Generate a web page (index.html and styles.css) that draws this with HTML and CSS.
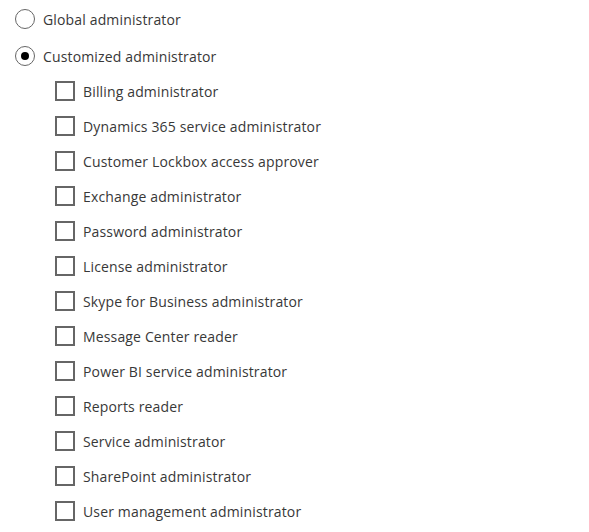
FILE: index.html
```html
<!DOCTYPE html>
<html>
<head>
<meta charset="utf-8">
<link rel="stylesheet" href="styles.css">
</head>
<body>
<div class="form">
  <div class="radios">
    <label class="row"><span class="radio"></span><span class="label">Global administrator</span></label>
    <label class="row"><span class="radio checked"></span><span class="label">Customized administrator</span></label>
  </div>
  <div class="checks">
    <label class="row"><span class="box"></span><span class="label">Billing administrator</span></label>
    <label class="row"><span class="box"></span><span class="label">Dynamics 365 service administrator</span></label>
    <label class="row"><span class="box"></span><span class="label">Customer Lockbox access approver</span></label>
    <label class="row"><span class="box"></span><span class="label">Exchange administrator</span></label>
    <label class="row"><span class="box"></span><span class="label">Password administrator</span></label>
    <label class="row"><span class="box"></span><span class="label">License administrator</span></label>
    <label class="row"><span class="box"></span><span class="label">Skype for Business administrator</span></label>
    <label class="row"><span class="box"></span><span class="label">Message Center reader</span></label>
    <label class="row"><span class="box"></span><span class="label">Power BI service administrator</span></label>
    <label class="row"><span class="box"></span><span class="label">Reports reader</span></label>
    <label class="row"><span class="box"></span><span class="label">Service administrator</span></label>
    <label class="row"><span class="box"></span><span class="label">SharePoint administrator</span></label>
    <label class="row"><span class="box"></span><span class="label">User management administrator</span></label>
  </div>
</div>
</body>
</html>
```
FILE: styles.css
```css
html, body {
  margin: 0;
  padding: 0;
  background: #ffffff;
}
body {
  font-family: "Open Sans", "Noto Sans", sans-serif;
  font-size: 14px;
  color: #383838;
}
.form {
  padding: 9px 0 0 15px;
  display: flex;
  flex-direction: column;
  gap: 15px;
}
.radios {
  display: flex;
  flex-direction: column;
  gap: 17px;
}
.checks {
  display: flex;
  flex-direction: column;
  gap: 15px;
  padding-left: 40px;
}
.row {
  display: flex;
  align-items: center;
  gap: 8px;
  height: 20px;
}
.label {
  line-height: 20px;
  padding-top: 2px;
  letter-spacing: 0.15px;
  white-space: nowrap;
}
.radio {
  box-sizing: border-box;
  width: 20px;
  height: 20px;
  border: 1.5px solid #666666;
  border-radius: 50%;
  display: flex;
  align-items: center;
  justify-content: center;
  flex: none;
}
.radio.checked::after {
  content: "";
  width: 8px;
  height: 8px;
  border-radius: 50%;
  background: #000000;
}
.box {
  box-sizing: border-box;
  width: 20px;
  height: 20px;
  border: 2px solid #666666;
  flex: none;
}
```
